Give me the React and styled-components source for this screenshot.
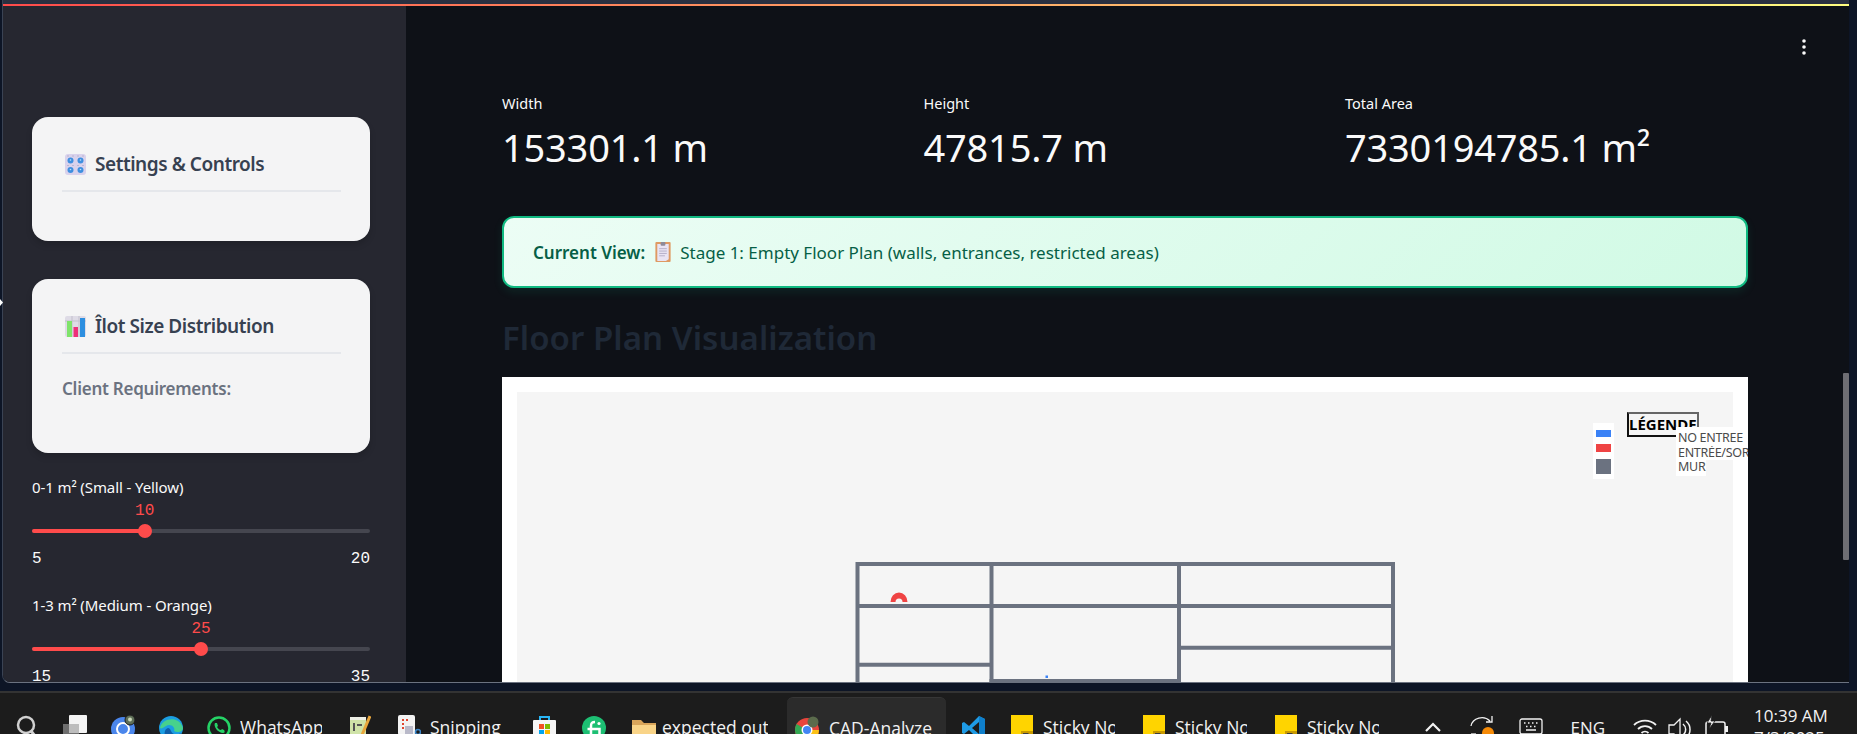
import React from "react";
import styled, { createGlobalStyle } from "styled-components";

const UI = `"Noto Sans", "Open Sans", sans-serif`;
const MONO = `"Liberation Mono", "DejaVu Sans Mono", monospace`;
const WIN = `"Open Sans", "Noto Sans", sans-serif`;

const Global = createGlobalStyle`
  html, body { margin: 0; padding: 0; height: 100%; overflow: hidden; background: #0d1526; }
  * { box-sizing: border-box; }
  #root { height: 100%; }
`;

const Page = styled.div`
  height: 734px; display: flex; flex-direction: column; overflow: hidden;
  background: #0d1526; font-family: ${UI}; position: relative;
`;
const Win = styled.div`
  height: 683px; flex: none; margin: 0 8px 0 2px; display: flex; flex-direction: column; overflow: hidden;
  border-left: 1px solid #3a4354; border-bottom: 1px solid #6b7280; border-bottom-left-radius: 8px;
`;
const TopStrip = styled.div`
  height: 4px; background: #2a3040; flex: none;
`;
const Deco = styled.div`
  height: 2px; flex: none; background: linear-gradient(to right, #ff4b4b, #fffd80);
`;
const Body = styled.div`
  flex: 1; min-height: 0; display: flex; position: relative;
`;
const Sidebar = styled.aside`
  width: 403px; flex: none; background: #262730; padding: 111px 36px 0 29px; overflow: hidden;
`;
const Card = styled.section`
  background: #f4f4f5; border-radius: 16px; padding: 32px 29px 49px 30px;
  margin-bottom: ${p => p.$mb || 0}px; box-shadow: 0 4px 6px rgba(0,0,0,.15);
`;
const CardTitle = styled.h3`
  margin: 0; height: 43px; padding: 0 0 11px 3px; display: flex; align-items: center; gap: 9px;
  border-bottom: 2px solid #e5e7eb; font-size: 19px; font-weight: 600; line-height: 30px;
  letter-spacing: -0.45px; color: #374151;
`;
const Req = styled.p`
  margin: 24px 0 4px; font-size: 17px; line-height: 22px; font-weight: 600; letter-spacing: -0.25px; color: #6b7280;
`;
const SliderBlock = styled.div`
  margin-top: ${p => p.$mt}px;
`;
const SliderLabel = styled.div`
  font-size: 15px; line-height: 20px; color: #fafafa; letter-spacing: -0.1px;
`;
const Track = styled.div`
  margin-top: 32px; height: 4px; border-radius: 2px; background: #45464f; position: relative;
`;
const Fill = styled.div`
  height: 100%; border-radius: 2px; background: #ff4b4b;
`;
const Thumb = styled.div`
  position: absolute; top: -5px; width: 14px; height: 14px; margin-left: -7px;
  border-radius: 50%; background: #ff4b4b;
`;
const ThumbValue = styled.div`
  position: absolute; top: -28px; transform: translateX(-50%);
  font-family: ${MONO}; font-size: 16px; line-height: 20px; color: #ff4b4b;
`;
const Ticks = styled.div`
  margin-top: 16px; display: flex; justify-content: space-between;
  font-family: ${MONO}; font-size: 16px; line-height: 20px; color: #fafafa;
`;
const Main = styled.main`
  flex: 1; min-width: 0; background: #0e1117; padding: 87px 101px 0 96px; overflow: hidden; position: relative;
`;
const Kebab = styled.svg`
  position: absolute; top: 32px; right: 43px; width: 4px; height: 18px;
`;
const ScrollThumb = styled.div`
  position: absolute; right: 0; top: 367px; width: 6px; height: 187px; background: #6e6e73; border-radius: 1px;
`;
const Metrics = styled.div`
  display: grid; grid-template-columns: repeat(3, 421.5px);
`;
const MetricLabel = styled.div`
  font-size: 14.5px; line-height: 20px; color: #fafafa;
`;
const MetricValue = styled.div`
  margin-top: 8px; font-size: 38px; line-height: 52px; color: #fafafa; letter-spacing: -0.2px; white-space: nowrap;
`;
const Banner = styled.div`
  margin-top: 43px; height: 72px; border: 2px solid #10b981; border-radius: 12px;
  background: linear-gradient(135deg, #ecfdf5, #d1fae5); box-shadow: 0 4px 10px rgba(16,185,129,.12);
  padding-left: 29px; display: flex; align-items: center; gap: 9.5px;
  font-size: 17px; color: #065f46;
`;
const BannerStrong = styled.strong`
  font-weight: 600;
`;
const Heading = styled.h2`
  margin: 28px 0 0; font-size: 33px; line-height: 44px; font-weight: 600; color: #1f2937; letter-spacing: 0.05px;
`;
const Plot = styled.div`
  margin-top: 17px; background: #fff; padding: 15px; height: 420px; overflow: hidden;
`;
const PlotArea = styled.div`
  position: relative; background: #f5f5f5; height: 400px;
`;
const PlotSvg = styled.svg`
  display: block; width: 1216px; height: 400px;
`;
const LegendTitle = styled.div`
  position: absolute; left: 1110px; top: 20px; width: 72px; height: 25px;
  border: 2px solid #111; border-top-color: #666; border-right-color: #666;
  padding-left: 0; font-size: 15px; line-height: 21px; font-weight: 700; color: #000; white-space: nowrap; overflow: hidden;
`;
const Swatches = styled.div`
  position: absolute; left: 1076px; top: 31px; width: 21px; height: 56px; background: #fff;
  padding: 7px 3px 0; display: flex; flex-direction: column;
`;
const Swatch = styled.div`
  width: 15px; height: ${p => p.$h}px; background: ${p => p.$c}; margin-bottom: ${p => p.$mb}px;
`;
const LegendLabels = styled.div`
  position: absolute; left: 1159px; top: 35px; width: 90px;
  font-size: 12.5px; line-height: 14.7px; color: #4b4b4b; letter-spacing: -0.3px;
`;
const LegendLine = styled.div`
  background: #fff; padding: ${p => p.$pt || 0}px 0 ${p => p.$pb || 0}px 2px; white-space: nowrap;
  width: ${p => p.$w}px; overflow: hidden;
`;
const Taskbar = styled.footer`
  margin-top: 8px; height: 43px; flex: none; background: #1c1c1c; border-top: 2px solid #333;
  display: flex; padding-left: 16px; overflow: hidden; font-family: ${WIN}; color: #f2f2f2;
`;
const Slot = styled.div`
  width: ${p => p.$w}px; flex: none; display: flex; gap: ${p => p.$gap || 9}px; padding-top: ${p => p.$pt || 22}px;
`;
const TaskText = styled.div`
  width: ${p => p.$w}px; flex: none; overflow: hidden; white-space: nowrap; font-size: 17.5px; line-height: 22px;
  margin-top: ${p => p.$mt || 1}px; margin-left: ${p => p.$ml || 0}px;
`;
const ActiveTab = styled.div`
  width: 159px; flex: none; margin: 4px 16px 0 8px; padding: 18px 0 0 8px; display: flex; gap: 9px;
  background: #2b2b2b; border-radius: 6px 6px 0 0; border-top: 1px solid #363636;
`;
const TrayItem = styled.div`
  width: ${p => p.$w}px; flex: none; margin-left: ${p => p.$ml || 0}px; padding-top: ${p => p.$pt || 22}px;
  font-size: 17px; line-height: 22px;
`;
const Clock = styled.div`
  width: 90px; flex: none; padding: 12px 0 0; font-size: 17px; line-height: 22px; white-space: nowrap;
`;
const Cursor = styled.svg`
  position: absolute; left: 0; top: 298px; width: 4px; height: 9px;
`;

const SliderRow = ({ label, value, min, max, mt }) => {
  const pct = ((value - min) / (max - min)) * 100;
  return (
    <SliderBlock $mt={mt}>
      <SliderLabel>{label}</SliderLabel>
      <Track>
        <Fill style={{ width: `${pct}%` }} />
        <Thumb style={{ left: `${pct}%` }} />
        <ThumbValue style={{ left: `${pct}%` }}>{value}</ThumbValue>
      </Track>
      <Ticks><span>{min}</span><span>{max}</span></Ticks>
    </SliderBlock>
  );
};

const KnobsEmoji = () => (
  <svg width="21" height="21" viewBox="0 0 21 21" style={{ flex: "none" }}>
    <rect width="21" height="21" rx="3" fill="#d9d2ec" />
    {[[5.500, 6.500], [15.500, 6.500], [5.500, 16], [15.500, 16]].map(([x, y]) => (
      <g key={`${x}${y}`}>
        <circle cx={x} cy={y} r="3" fill="#3f8fe0" />
        <circle cx={x} cy={y - 0.5} r="0.8" fill="#bfe0fb" />
        <path d={`M${x - 3} ${y - 4.5}h1M${x + 2} ${y - 4.5}h1`} stroke="#8f8aa8" strokeWidth="0.8" />
      </g>
    ))}
  </svg>
);
const ChartEmoji = () => (
  <svg width="21" height="21" viewBox="0 0 21 21" style={{ flex: "none" }}>
    <rect width="21" height="21" rx="2" fill="#dedbe6" />
    <path d="M7 0v21M14 0v21M0 5h21" stroke="#c3c0cc" />
    <rect x="2" y="5" width="5" height="16" fill="#7fe36b" />
    <rect x="8.500" y="11" width="4.500" height="10" fill="#ee2f79" />
    <rect x="15" y="2" width="5" height="19" fill="#2d8fe0" />
  </svg>
);
const ClipEmoji = () => (
  <svg width="16" height="20" viewBox="0 0 16 21" style={{ flex: "none" }}>
    <rect width="16" height="21" rx="1" fill="#df9a63" />
    <path d="M2 2h12v16l-3 2H2z" fill="#e9e3f3" />
    <rect x="5.500" y="0" width="5" height="4" rx="1" fill="#8d8a99" />
    <path d="M4 7h8M4 9.500h8M4 12h8M4 14.500h6" stroke="#b3adc6" strokeWidth="1" />
  </svg>
);

const Ic = ({ w = 24, h = 24, children }) => (
  <svg width={w} height={h} viewBox={`0 0 ${w} ${h}`} style={{ flex: "none", display: "block" }}>{children}</svg>
);
const SearchIc = () => (
  <Ic w={20} h={24}>
    <circle cx="10" cy="10" r="8" fill="none" stroke="#d0d0d0" strokeWidth="2.500" />
    <path d="M15 16l4 5" stroke="#d0d0d0" strokeWidth="3" />
  </Ic>
);
const TaskViewIc = () => (
  <Ic>
    <rect x="0" y="9" width="16" height="15" fill="#6e6e6e" />
    <rect x="6" y="0" width="18" height="18" rx="1" fill="#f4f4f4" />
    <rect x="6" y="9" width="10" height="9" fill="#bdbdbd" />
  </Ic>
);
const ChromeRing = () => (
  <Ic>
    <circle cx="12" cy="14" r="12" fill="#4a86ec" />
    <circle cx="12" cy="14" r="6" fill="none" stroke="#fff" strokeWidth="2" />
    <circle cx="19" cy="5" r="5" fill="#5f6f58" stroke="#1c1c1c" />
    <circle cx="19" cy="4.500" r="2" fill="#c9d6b8" />
  </Ic>
);
const EdgeIc = () => (
  <Ic>
    <circle cx="12" cy="13" r="12" fill="#1b9de2" />
    <path d="M1 13C3 3 20 0 24 13c0 4-6 5-9 3 2-4-4-8-8-5-3 2-5 3-6 2z" fill="#47d18c" />
    <path d="M9 24c-5-3-4-10 0-11 3 0 2 4 6 6 3 1 5 0 7-1-3 5-8 8-13 6z" fill="#0f5ea8" />
  </Ic>
);
const WhatsIc = () => (
  <Ic>
    <circle cx="12" cy="13" r="10.500" fill="none" stroke="#25d366" strokeWidth="2.500" />
    <path d="M8 8c-2 3 3 10 8 10 2 0 2-2 1-3l-2-1-1 1c-2 0-3-2-4-3l1-1-1-3z" fill="#25d366" />
  </Ic>
);
const NotepadIc = () => (
  <Ic w={21}>
    <path d="M0 2h16v22H0z" fill="#cfe3a8" />
    <path d="M0 2h16v3H0z" fill="#eef0e6" />
    <path d="M4 8v8M7 10h5" stroke="#555" strokeWidth="2" />
    <path d="M20 1l-8 19" stroke="#e8a63c" strokeWidth="3" />
  </Ic>
);
const SnipIc = () => (
  <Ic w={23}>
    <rect x="0" y="0" width="17" height="20" rx="2" fill="#f3f3f3" />
    <path d="M4 4h2v2H4zM8 4h2v2H8zM4 8h2v2H4zM4 12h2v2H4z" fill="#e0452f" />
    <rect x="7" y="11" width="8" height="11" fill="#b9b9c9" />
    <path d="M10 22l8-2" stroke="#5a9bd5" strokeWidth="2" />
    <circle cx="20" cy="17" r="2.500" fill="none" stroke="#3a85c9" strokeWidth="1.500" />
  </Ic>
);
const StoreIc = () => (
  <Ic w={23}>
    <path d="M7 5V2h9v3" fill="none" stroke="#29b6f6" strokeWidth="2" />
    <rect x="0" y="5" width="23" height="19" rx="1" fill="#f5f5f5" />
    <rect x="6" y="9" width="5" height="5" fill="#f25022" />
    <rect x="12" y="9" width="5" height="5" fill="#7fba00" />
    <rect x="6" y="15" width="5" height="5" fill="#00a4ef" />
    <rect x="12" y="15" width="5" height="5" fill="#ffb900" />
  </Ic>
);
const FiverrIc = () => (
  <Ic>
    <circle cx="12" cy="13" r="12" fill="#1dbf73" />
    <path d="M9 25V11c0-3 1-4 4-4M5.500 14H17.500V25" stroke="#fff" strokeWidth="2.500" fill="none" />
    <circle cx="17" cy="8.500" r="1.600" fill="#fff" />
  </Ic>
);
const FolderIc = () => (
  <Ic w={24} h={20}>
    <path d="M0 0h9l3 3h12v17H0z" fill="#d9a55a" />
    <path d="M0 5h24v15H0z" fill="#f9d488" />
  </Ic>
);
const ChromeIc = () => (
  <Ic w={25}>
    <circle cx="12" cy="14" r="12" fill="#e8453c" />
    <path d="M12 14L1.500 8A12 12 0 0 0 9 25.500z" fill="#34a853" />
    <path d="M12 14l12 0A12 12 0 0 1 9 25.500z" fill="#fbc116" />
    <circle cx="12" cy="14" r="5.500" fill="#fff" />
    <circle cx="12" cy="14" r="4" fill="#4285f4" />
    <circle cx="18" cy="6" r="5.500" fill="#5b6b4c" />
  </Ic>
);
const VsIc = () => (
  <Ic>
    <path d="M17 1l6 3v18l-6 3-10-10-5 4-2-1V8l2-1 5 4z" fill="#1e9be6" />
    <path d="M17 7l-7 6 7 6z" fill="#1c1c1c" />
    <path d="M17 1l6 3v18l-6 3z" fill="#0f7fcb" />
  </Ic>
);
const StickyIc = () => (
  <Ic w={22}>
    <rect width="22" height="24" fill="#ffd400" />
    <path d="M10 24v-8h12v8z" fill="#c99a00" />
    <path d="M12 24l6-6h-6z" fill="#3d3d3d" />
  </Ic>
);
const Chevron = () => (
  <Ic w={16} h={10}><path d="M1 9l7-7 7 7" fill="none" stroke="#f2f2f2" strokeWidth="2.200" /></Ic>
);
const SyncIc = () => (
  <Ic w={24}>
    <path d="M1 11A11 10 0 0 1 20 6M22 1v6h-6" fill="none" stroke="#f2f2f2" strokeWidth="1.300" />
    <path d="M1 19h5" stroke="#f2f2f2" strokeWidth="1.300" />
    <circle cx="18" cy="18" r="6" fill="#f58a07" />
  </Ic>
);
const KeyboardIc = () => (
  <Ic w={24} h={18}>
    <rect x="1" y="1" width="22" height="15" rx="2" fill="none" stroke="#f2f2f2" strokeWidth="1.300" />
    <path d="M5 5h1.500M9 5h1.500M13 5h1.500M17 5h1.500M7 8.500h1.500M11 8.500h1.500M15 8.500h1.500M7 12h10" stroke="#f2f2f2" strokeWidth="1.500" />
  </Ic>
);
const WifiIc = () => (
  <Ic w={24} h={20}>
    <path d="M1 7a16 16 0 0 1 22 0M5 11a10 10 0 0 1 14 0M8.500 15a5 5 0 0 1 7 0" fill="none" stroke="#f2f2f2" strokeWidth="1.800" />
    <circle cx="12" cy="18" r="2" fill="#f2f2f2" />
  </Ic>
);
const SpeakerIc = () => (
  <Ic w={24} h={24}>
    <path d="M1 8h5l6-6v20l-6-5H1z" fill="none" stroke="#f2f2f2" strokeWidth="1.300" />
    <path d="M15 7a7 7 0 0 1 0 11M18 4a11 11 0 0 1 0 17" fill="none" stroke="#f2f2f2" strokeWidth="1.500" />
  </Ic>
);
const BatteryIc = () => (
  <Ic w={24} h={24}>
    <rect x="2" y="7" width="19" height="14" rx="2" fill="none" stroke="#f2f2f2" strokeWidth="1.500" />
    <rect x="21" y="11" width="3" height="6" fill="#f2f2f2" />
    <path d="M8 0L3 8h4l-2 6 6-8H7z" fill="#f2f2f2" stroke="#1c1c1c" strokeWidth="0.800" />
  </Ic>
);

const walls = [
  "M857.500 700V564H1393V700",
  "M991.500 562V683",
  "M1179 562V683",
  "M857.500 606H1395",
  "M857.500 664.700H993",
  "M1179 647.700H1395",
  "M989.500 681H1181",
];

export default function App() {
  return (
    <Page>
      <Global />
      <Win>
        <TopStrip />
        <Deco />
        <Body>
          <Sidebar>
            <Card $mb={38}>
              <CardTitle><KnobsEmoji />Settings &amp; Controls</CardTitle>
            </Card>
            <Card>
              <CardTitle><ChartEmoji />Îlot Size Distribution</CardTitle>
              <Req>Client Requirements:</Req>
            </Card>
            <SliderRow mt={24} label="0-1 m² (Small - Yellow)" value={10} min={5} max={20} />
            <SliderRow mt={26} label="1-3 m² (Medium - Orange)" value={25} min={15} max={35} />
          </Sidebar>
          <Main>
            <Kebab viewBox="0 0 4 18">
              <circle cx="2" cy="3" r="1.800" fill="#fafafa" />
              <circle cx="2" cy="9" r="1.800" fill="#fafafa" />
              <circle cx="2" cy="15" r="1.800" fill="#fafafa" />
            </Kebab>
            <ScrollThumb />
            <Metrics>
              <div><MetricLabel>Width</MetricLabel><MetricValue>153301.1 m</MetricValue></div>
              <div><MetricLabel>Height</MetricLabel><MetricValue>47815.7 m</MetricValue></div>
              <div><MetricLabel>Total Area</MetricLabel><MetricValue>7330194785.1 m²</MetricValue></div>
            </Metrics>
            <Banner>
              <BannerStrong>Current View:</BannerStrong>
              <ClipEmoji />
              <span>Stage 1: Empty Floor Plan (walls, entrances, restricted areas)</span>
            </Banner>
            <Heading>Floor Plan Visualization</Heading>
            <Plot>
              <PlotArea>
                <PlotSvg viewBox="517 392 1216 400">
                  {walls.map(d => (
                    <path key={d} d={d} fill="none" stroke="#6b7280" strokeWidth="4" />
                  ))}
                  <path d="M890.500 602a8.500 9.500 0 0 1 17 0h-5a3.500 3.500 0 0 0-7 0z" fill="#ef4444" />
                  <rect x="1045.500" y="675.500" width="2.500" height="2.500" fill="#3b82f6" />
                </PlotSvg>
                <LegendTitle>LÉGENDE</LegendTitle>
                <Swatches>
                  <Swatch $c="#3b82f6" $h={7} $mb={7} />
                  <Swatch $c="#ef4444" $h={8} $mb={7} />
                  <Swatch $c="#6b7280" $h={15} $mb={0} />
                </Swatches>
                <LegendLabels>
                  <LegendLine $w={90} $pt={4}>NO ENTREE</LegendLine>
                  <LegendLine $w={90}>ENTRÉE/SORTIE</LegendLine>
                  <LegendLine $w={30} $pb={1}>MUR</LegendLine>
                </LegendLabels>
              </PlotArea>
            </Plot>
          </Main>
        </Body>
      </Win>
      <Taskbar>
        <Slot $w={47}><SearchIc /></Slot>
        <Slot $w={48}><TaskViewIc /></Slot>
        <Slot $w={48}><ChromeRing /></Slot>
        <Slot $w={48}><EdgeIc /></Slot>
        <Slot $w={143}><WhatsIc /><TaskText $w={82}>WhatsApp</TaskText></Slot>
        <Slot $w={48}><NotepadIc /></Slot>
        <Slot $w={135}><SnipIc /><TaskText $w={71}>Snipping Tool</TaskText></Slot>
        <Slot $w={49}><StoreIc /></Slot>
        <Slot $w={50}><FiverrIc /></Slot>
        <Slot $w={147} $pt={27}><FolderIc /><TaskText $w={106} $ml={-3} $mt={-4}>expected output</TaskText></Slot>
        <ActiveTab><ChromeIc /><TaskText $w={103}>CAD-Analyzer</TaskText></ActiveTab>
        <Slot $w={49}><VsIc /></Slot>
        <Slot $w={132} $gap={10}><StickyIc /><TaskText $w={72}>Sticky Notes</TaskText></Slot>
        <Slot $w={132} $gap={10}><StickyIc /><TaskText $w={72}>Sticky Notes</TaskText></Slot>
        <Slot $w={132} $gap={10}><StickyIc /><TaskText $w={72}>Sticky Notes</TaskText></Slot>
        <TrayItem $ml={18} $w={45} $pt={29}><Chevron /></TrayItem>
        <TrayItem $w={48.500}><SyncIc /></TrayItem>
        <TrayItem $w={52} $pt={25}><KeyboardIc /></TrayItem>
        <TrayItem $w={62} $pt={24}>ENG</TrayItem>
        <TrayItem $w={35.500} $pt={25}><WifiIc /></TrayItem>
        <TrayItem $w={36} $pt={24}><SpeakerIc /></TrayItem>
        <TrayItem $w={50}><BatteryIc /></TrayItem>
        <Clock>10:39 AM<br />7/3/2025</Clock>
      </Taskbar>
      <Cursor viewBox="0 0 4 9"><path d="M0 1l3 3.500L0 8z" fill="#fff" /></Cursor>
    </Page>
  );
}
